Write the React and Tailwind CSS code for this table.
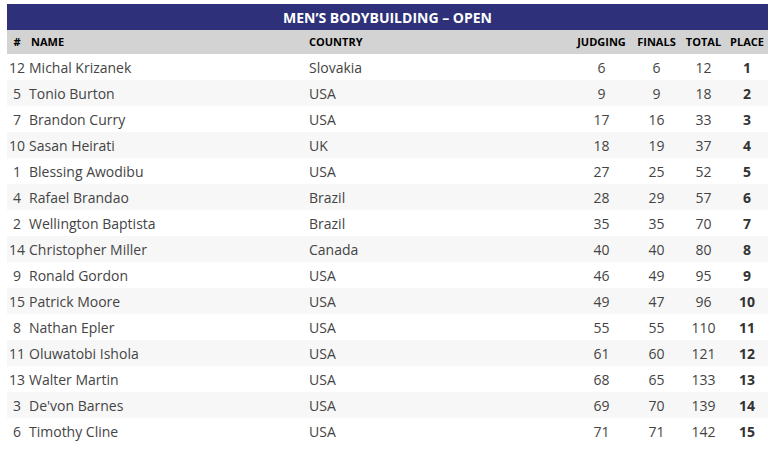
import React from "react";

const rows = [
  [12, "Michal Krizanek", "Slovakia", 6, 6, 12, 1],
  [5, "Tonio Burton", "USA", 9, 9, 18, 2],
  [7, "Brandon Curry", "USA", 17, 16, 33, 3],
  [10, "Sasan Heirati", "UK", 18, 19, 37, 4],
  [1, "Blessing Awodibu", "USA", 27, 25, 52, 5],
  [4, "Rafael Brandao", "Brazil", 28, 29, 57, 6],
  [2, "Wellington Baptista", "Brazil", 35, 35, 70, 7],
  [14, "Christopher Miller", "Canada", 40, 40, 80, 8],
  [9, "Ronald Gordon", "USA", 46, 49, 95, 9],
  [15, "Patrick Moore", "USA", 49, 47, 96, 10],
  [8, "Nathan Epler", "USA", 55, 55, 110, 11],
  [11, "Oluwatobi Ishola", "USA", 61, 60, 121, 12],
  [13, "Walter Martin", "USA", 68, 65, 133, 13],
  [3, "De'von Barnes", "USA", 69, 70, 139, 14],
  [6, "Timothy Cline", "USA", 71, 71, 142, 15],
];

export default function App() {
  return (
    <div className="bg-white w-[774px] h-[453px] pt-[4px] pl-[7px] font-['Open_Sans',sans-serif]">
      <table className="w-[761px] table-fixed border-collapse">
        <colgroup>
          <col className="w-[20px]" />
          <col className="w-[278px]" />
          <col className="w-[266px]" />
          <col className="w-[61px]" />
          <col className="w-[49px]" />
          <col className="w-[45px]" />
          <col className="w-[42px]" />
        </colgroup>
        <thead>
          <tr className="bg-[#2e307a] h-[26px]">
            <th colSpan={7} className="text-white text-[14px] font-bold text-center p-0">
              MEN’S BODYBUILDING – OPEN
            </th>
          </tr>
          <tr className="bg-[#d3d3d3] h-[24px] text-[11px] font-bold text-black">
            <th className="text-center p-0">#</th>
            <th className="text-left pl-[4px]">NAME</th>
            <th className="text-left pl-[4px]">COUNTRY</th>
            <th className="text-center p-0">JUDGING</th>
            <th className="text-center p-0">FINALS</th>
            <th className="text-center p-0">TOTAL</th>
            <th className="text-center p-0">PLACE</th>
          </tr>
        </thead>
        <tbody>
          {rows.map((r, i) => (
            <tr key={r[1]} className={`h-[26px] text-[14px] text-[#444] ${i % 2 ? "bg-[#f7f7f7]" : "bg-white"}`}>
              <td className="text-center p-0">{r[0]}</td>
              <td className="pl-[2px]">{r[1]}</td>
              <td className="pl-[4px]">{r[2]}</td>
              <td className="text-center">{r[3]}</td>
              <td className="text-center">{r[4]}</td>
              <td className="text-center">{r[5]}</td>
              <td className="text-center font-bold text-[#333]">{r[6]}</td>
            </tr>
          ))}
        </tbody>
      </table>
    </div>
  );
}
